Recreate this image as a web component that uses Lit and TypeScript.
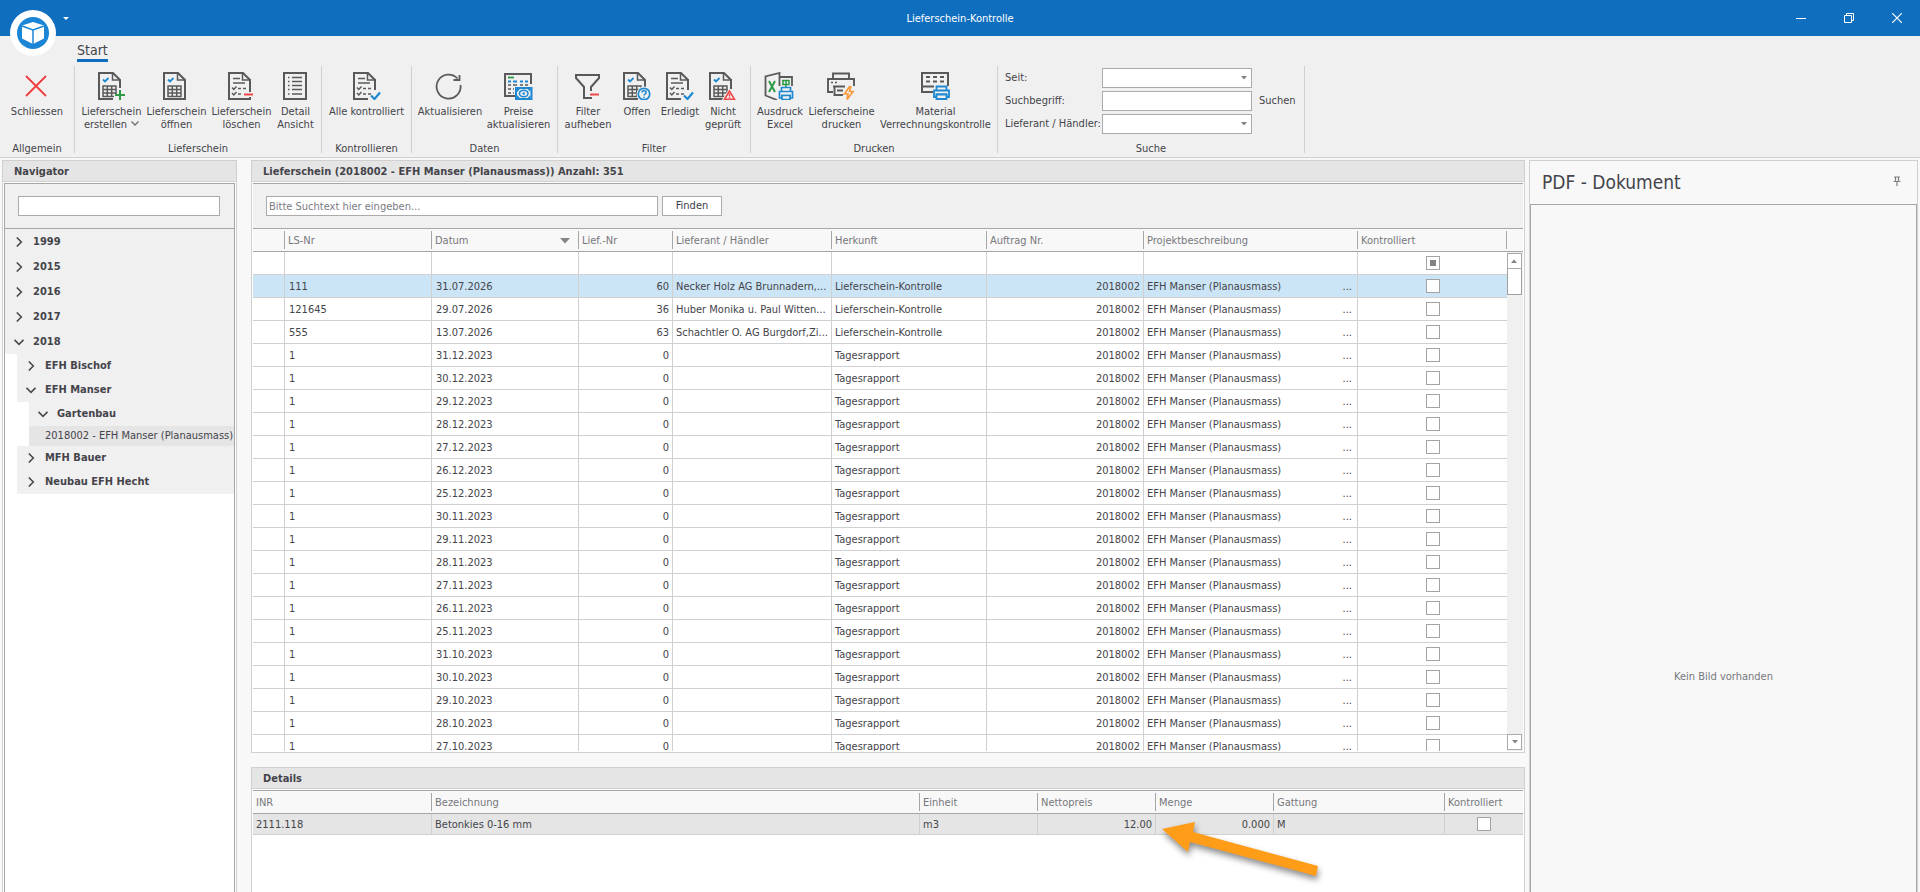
import { LitElement, html, css, svg, nothing } from "lit";
import { customElement, property } from "lit/decorators.js";
import { classMap } from "lit/directives/class-map.js";

const INK = "#595959";
const BLUE = "#1e88d0";
const RED = "#f04848";
const GREEN = "#2d9a45";

const sheet = svg`<g fill="none" stroke=${INK} stroke-width="2">
  <path d="M4 1H18L25 8V16M4 0V28M3 27H18" />
  <path d="M17.500 1V8H25" stroke-width="1.500" />
</g>`;
const sheetFull = svg`<g fill="none" stroke=${INK} stroke-width="2">
  <path d="M4 1H18L25 8V27H4Z" />
  <path d="M17.500 1V8H25" stroke-width="1.500" />
</g>`;
const calc = svg`<path d="M8 7.500L10 9.500L13.500 6" fill="none" stroke=${BLUE} stroke-width="1.800" />
  <path d="M7.500 14H21.500M7.500 17.500H21.500M7.500 21H21.500M7.500 24.500H21.500M8 13.500V25M12.300 13.500V25M16.700 13.500V25M21 13.500V25" fill="none" stroke=${INK} stroke-width="1.500" />`;
const list = svg`<path d="M8 6.500H15M8 11H20M13 16.500H16M18 16.500H21M13 22H16M18 22H21" fill="none" stroke=${INK} stroke-width="1.700" />
  <path d="M7 15.500L8.800 17.500L11.500 14.500M7 21L8.800 23L11.500 20" fill="none" stroke=${INK} stroke-width="1.500" />`;
const blueTick = svg`<path d="M21 23.500L24.500 27L30 20.500" fill="none" stroke=${BLUE} stroke-width="2.200" />`;
const printerBadge = svg`<g fill="#f0f0f0" stroke=${BLUE} stroke-width="1.700">
  <path d="M18.500 20V15.500H27.500V20" /><path d="M16.500 19.500H29.500V26H27V23.500H19V26H16.500Z" /><path d="M19 23.500H27V27.500H19Z" />
</g>`;

const ICONS: Record<string, unknown> = {
  close: svg`<path d="M6 4L26 24M26 4L6 24" stroke="#f03c3c" stroke-width="1.800" fill="none" />`,
  create: svg`${sheet}${calc}<path d="M19 22H25V18H30V28H19Z" fill="#f0f0f0" /><path d="M25 18V28M20 23H30" stroke=${GREEN} stroke-width="2" />`,
  open: svg`${sheetFull}${calc}`,
  remove: svg`${sheet}${list}<path d="M25 7V20M17 27H25V25" stroke=${INK} stroke-width="2" fill="none" /><path d="M18 22H28" stroke="#f0f0f0" stroke-width="4" /><path d="M19 22.500H28" stroke=${RED} stroke-width="2" />`,
  detail: svg`<rect x="5" y="1" width="22" height="26" fill="none" stroke=${INK} stroke-width="2" />
    <path d="M9 5.500H10.500M9 9.500H10.500M9 13.500H10.500M9 17.500H10.500M9 22H10.500M13 5.500H23M13 9.500H23M13 13.500H23M13 17.500H23M13 22H23" stroke=${INK} stroke-width="1.600" />`,
  check: svg`${sheet}${list}<path d="M25 7V18" stroke=${INK} stroke-width="2" />${blueTick}`,
  refresh: svg`<path d="M27.500 13A12 12 0 1 1 24.500 6.500" fill="none" stroke=${INK} stroke-width="1.800" />
    <path d="M26.500 3V8H20.500" fill="none" stroke=${INK} stroke-width="1.800" />`,
  price: svg`<path d="M13 24H3V2H29V12" fill="none" stroke=${INK} stroke-width="2" />
    <path d="M6 5.500H12" stroke=${GREEN} stroke-width="1.800" />
    <path d="M6 9.500H9M11 9.500H15M18 9.500H21M23 9.500H26" stroke=${BLUE} stroke-width="1.800" />
    <path d="M6 13H9M11 13H15M18 13H21M23 13H26M6 17H9M11 17H12M6 21H9M11 21H12" stroke=${INK} stroke-width="1.500" />
    <path d="M13 15H30V28H13Z" fill="#f0f0f0" /><path d="M14 16H29.500V27H14Z" fill="none" stroke=${BLUE} stroke-width="2" />
    <ellipse cx="21.700" cy="21.500" rx="4.300" ry="3.300" fill="none" stroke=${BLUE} stroke-width="1.600" /><circle cx="21.700" cy="21.500" r="1.300" fill=${BLUE} />
    <path d="M15 20V17H18ZM28.500 20V17H25.500ZM15 23V26H18ZM28.500 23V26H25.500Z" fill=${BLUE} />`,
  funnel: svg`<path d="M21 26H13V15L5 6V3H28V6L20 15V19" fill="none" stroke=${INK} stroke-width="2" /><path d="M19 22.500H28" stroke=${RED} stroke-width="2" />`,
  question: svg`${sheet}${calc}<circle cx="24" cy="22" r="7.500" fill="#f0f0f0" /><circle cx="24" cy="22" r="5.700" fill="none" stroke=${BLUE} stroke-width="1.700" />
    <path d="M22 20.500C22 18.200 26.200 18.200 26.200 20.500C26.200 22 24.100 21.800 24.100 23.600M24.100 24.800V26" fill="none" stroke=${BLUE} stroke-width="1.500" />`,
  warning: svg`${sheet}${calc}<path d="M25 7V17" stroke=${INK} stroke-width="2" /><path d="M23 17L15.500 28.500H30Z" fill="#f0f0f0" /><path d="M23.500 19L18.500 27.300H28.500Z" fill="none" stroke=${RED} stroke-width="1.600" /><path d="M23.500 21.500V24.500M23.500 25V26.200" stroke=${RED} stroke-width="1.500" />`,
  excel: svg`<path d="M14 28L2.500 23.500V4.500L16.500 1V14" fill="none" stroke=${INK} stroke-width="1.800" /><path d="M17 5H29V14" fill="none" stroke=${INK} stroke-width="1.800" />
    <path d="M6 9L12 20M12 9L6 20" stroke=${GREEN} stroke-width="2" /><path d="M19 8.500H26.500M19 12.500H26.500M20 8V13M23 8V15M26 8V13" stroke=${GREEN} stroke-width="1.500" />${printerBadge}`,
  printer: svg`<path d="M8 7V1.500H24V7M8 20H3V7H29V14M8 14.500H20M9.500 14.500V23H18M12 18.500H18" fill="none" stroke=${INK} stroke-width="1.900" />
    <path d="M6 10.500H8M10 10.500H12" stroke=${INK} stroke-width="1.600" /><path d="M25 14L19.500 22H23L22 27.500L28 19.500H24.500L26 14" fill="none" stroke="#f79a3c" stroke-width="1.700" />`,
  material: svg`<path d="M14 20H3V1H29V14M3 14.500H15" fill="none" stroke=${INK} stroke-width="2" />
    <path d="M7 5H11M14 5H18M21 5H25M7 9.500H11M14 9.500H18M21 9.500H25" stroke=${INK} stroke-width="1.800" />
    <g fill="#f0f0f0" stroke=${BLUE} stroke-width="1.800"><path d="M17.500 19V14.500H27.500V19" /><path d="M15 18.500H30V25H27.500V22.500H17.500V25H15Z" /><path d="M17.500 22.500H27.500V27H17.500Z" /></g>`,
};

const chevronDown = html`<svg class="caret" width="8" height="5" viewBox="0 0 8 5" aria-hidden="true"><path d="M0.500 0.500L4 4L7.500 0.500" fill="none" stroke="#6e6e6e" stroke-width="1.300" /></svg>`;
const triDown = html`<svg width="6" height="4" viewBox="0 0 6 4" aria-hidden="true"><path d="M0 0H6L3 3.500Z" fill="#848484" /></svg>`;

interface Item { icon: string; lines: string[]; size: string; menu?: boolean }
interface Group { caption: string; items: Item[] }

const GROUPS: Group[] = [
  { caption: "Allgemein", items: [{ icon: "close", lines: ["Schliessen"], size: "w66" }] },
  {
    caption: "Lieferschein",
    items: [
      { icon: "create", lines: ["Lieferschein", "erstellen"], size: "w65", menu: true },
      { icon: "open", lines: ["Lieferschein", "öffnen"], size: "w65" },
      { icon: "remove", lines: ["Lieferschein", "löschen"], size: "w65" },
      { icon: "detail", lines: ["Detail", "Ansicht"], size: "w43" },
    ],
  },
  { caption: "Kontrollieren", items: [{ icon: "check", lines: ["Alle kontrolliert"], size: "w81" }] },
  {
    caption: "Daten",
    items: [
      { icon: "refresh", lines: ["Aktualisieren"], size: "w68" },
      { icon: "price", lines: ["Preise", "aktualisieren"], size: "w69" },
    ],
  },
  {
    caption: "Filter",
    items: [
      { icon: "funnel", lines: ["Filter", "aufheben"], size: "w52" },
      { icon: "question", lines: ["Offen"], size: "w46" },
      { icon: "check", lines: ["Erledigt"], size: "w40" },
      { icon: "warning", lines: ["Nicht", "geprüft"], size: "w46" },
    ],
  },
  {
    caption: "Drucken",
    items: [
      { icon: "excel", lines: ["Ausdruck", "Excel"], size: "w50" },
      { icon: "printer", lines: ["Lieferscheine", "drucken"], size: "w73" },
      { icon: "material", lines: ["Material", "Verrechnungskontrolle"], size: "w115" },
    ],
  },
];

const base = css`
  :host, * { box-sizing: border-box; }
  button, input, select { font: inherit; color: inherit; margin: 0; padding: 0; border: 0; border-radius: 0; background: none; outline: none; }
  .field { height: 20px; border: 1px solid #ababab; background: #fff; padding: 0 2px; min-width: 0; }
  .field::placeholder { color: #7b7b85; opacity: 1; }
  .box { appearance: none; display: block; width: 14px; height: 14px; margin: 0 auto; border: 1px solid #a3a3a3; background: #fff; }
  .box:indeterminate { background: linear-gradient(#848484, #848484) center / 6px 6px no-repeat #fff; }
`;

@customElement("title-bar")
export class TitleBar extends LitElement {
  static styles = [base, css`
    :host { display: block; position: relative; z-index: 2; }
    .bar { display: grid; grid-template-columns: 1fr auto 1fr; align-items: center; height: 36px; background: #106ebe; color: #fff; }
    .start { display: flex; align-items: flex-start; gap: 6px; height: 36px; padding: 10px 0 0 10px; }
    .logo { flex: none; width: 46px; height: 46px; }
    .logo svg { display: block; }
    .quick { width: 7px; height: 16px; }
    .title { font-size: 11px; line-height: 14px; font-weight: 400; margin: 0; padding-top: 1px; }
    .controls { display: flex; justify-content: flex-end; }
    .control { width: 48px; height: 36px; padding-left: 2px; display: grid; place-items: center; }
  `];

  render() {
    return html`<header class="bar">
      <div class="start">
        <button class="logo" aria-label="Anwendungsmenü">
          <svg width="46" height="46" viewBox="0 0 46 46">
            <circle cx="23" cy="23" r="23" fill="#fff" /><circle cx="23" cy="23" r="16" fill="#1c86d6" />
            <path d="M23 12L34 15.500V28.500L23 34L12 28.500V15.500Z" fill="#fff" />
            <path d="M12 16L23 20L34 16M23 20V34" fill="none" stroke="#1c86d6" stroke-width="1.500" />
          </svg>
        </button>
        <button class="quick" aria-label="Schnellzugriff"><svg width="6" height="4" viewBox="0 0 6 4"><path d="M0 0H6L3 3Z" fill="#fff" /></svg></button>
      </div>
      <h1 class="title">Lieferschein-Kontrolle</h1>
      <div class="controls">
        <button class="control" aria-label="Minimieren"><svg width="10" height="10" viewBox="0 0 10 10"><path d="M0 5.500H10" stroke="#fff" /></svg></button>
        <button class="control" aria-label="Wiederherstellen"><svg width="10" height="10" viewBox="0 0 10 10"><path d="M0.500 2.500H7.500V9.500H0.500ZM2.500 2.500V0.500H9.500V7.500H7.500" fill="none" stroke="#fff" /></svg></button>
        <button class="control" aria-label="Fenster schliessen"><svg width="10" height="10" viewBox="0 0 10 10"><path d="M0 0L10 10M10 0L0 10" stroke="#fff" stroke-width="1.200" /></svg></button>
      </div>
    </header>`;
  }
}

@customElement("ribbon-bar")
export class RibbonBar extends LitElement {
  static styles = [base, css`
    :host { display: block; background: #f0f0f0; border-bottom: 1px solid #d0d0d0; }
    .tabs { height: 30px; padding: 6px 0 0 77px; display: flex; }
    .tab { height: 20px; padding-bottom: 3px; border-bottom: 3px solid #106ebe; font-size: 14px; line-height: 16px; }
    .groups { display: flex; height: 91px; }
    .group { display: flex; flex-direction: column; padding: 0 4px; }
    .rule { width: 1px; height: 87px; background: #d0d0d0; flex: none; }
    .items { display: flex; height: 76px; }
    .item { flex: none; display: flex; flex-direction: column; align-items: center; padding-top: 6px; line-height: 13px; white-space: nowrap; }
    .icon { display: block; flex: none; margin: 0 2px 5px 0; }
    .caption { text-align: center; line-height: 16px; }
    .caret { margin-left: 4px; vertical-align: 2px; }
    .w40 { width: 40px; } .w43 { width: 43px; } .w46 { width: 46px; } .w50 { width: 50px; } .w52 { width: 52px; }
    .w65 { width: 65px; } .w66 { width: 66px; } .w68 { width: 68px; } .w69 { width: 69px; } .w73 { width: 73px; }
    .w81 { width: 81px; } .w115 { width: 115px; }
    .search { display: grid; grid-template-columns: 97px 150px auto; grid-auto-rows: 20px; row-gap: 3px; align-items: center; height: 76px; padding: 2px 5px 0 3px; }
    .search label { grid-column: 1; white-space: nowrap; }
    .find { padding: 0 0 0 7px; width: 43px; }
    .combo { grid-column: 2; display: grid; align-items: center; }
    .combo > * { grid-area: 1 / 1; }
    .combo select { appearance: none; width: 100%; }
    .combo svg { justify-self: end; margin-right: 5px; pointer-events: none; }
    .text { width: 100%; }
  `];

  render() {
    return html`
      <nav class="tabs"><button class="tab">Start</button></nav>
      <div class="groups">
        ${GROUPS.map((g) => html`
          <section class="group">
            <div class="items">
              ${g.items.map((i) => html`<button class="item ${i.size}">
                <svg class="icon" width="32" height="28" viewBox="0 0 32 28" aria-hidden="true">${ICONS[i.icon]}</svg>
                ${i.lines.map((l, n) => html`<span>${l}${i.menu && n === 1 ? chevronDown : nothing}</span>`)}
              </button>`)}
            </div>
            <div class="caption">${g.caption}</div>
          </section>
          <div class="rule"></div>`)}
        <section class="group">
          <div class="search">
            <label for="since">Seit:</label>
            <div class="combo"><select id="since" class="field"></select>${triDown}</div>
            <label for="term">Suchbegriff:</label>
            <input id="term" class="field text" />
            <button class="find">Suchen</button>
            <label for="vendor">Lieferant / Händler:</label>
            <div class="combo"><select id="vendor" class="field"></select>${triDown}</div>
          </div>
          <div class="caption">Suche</div>
        </section>
        <div class="rule"></div>
      </div>`;
  }
}

interface Node { label: string; level: number; open?: boolean; leaf?: boolean }
const TREE: Node[] = [
  { label: "1999", level: 0 }, { label: "2015", level: 0 }, { label: "2016", level: 0 }, { label: "2017", level: 0 },
  { label: "2018", level: 0, open: true },
  { label: "EFH Bischof", level: 1 }, { label: "EFH Manser", level: 1, open: true },
  { label: "Gartenbau", level: 2, open: true },
  { label: "2018002 - EFH Manser (Planausmass)", level: 2, leaf: true },
  { label: "MFH Bauer", level: 1 }, { label: "Neubau EFH Hecht", level: 1 },
];

const panel = css`
  .panel { display: flex; flex-direction: column; border: 1px solid #d0d0d0; padding: 0 1px; background: #fff; min-height: 0; }
  .cut { border-bottom: 0; }
  .head { flex: none; height: 21px; margin: 0 -1px 1px; padding: 0 11px; background: #e5e5e5; border-bottom: 1px solid #d0d0d0; font-size: 11px; line-height: 22px; font-weight: 700; white-space: nowrap; }
`;

@customElement("navigator-panel")
export class NavigatorPanel extends LitElement {
  static styles = [base, panel, css`
    :host { display: flex; flex-direction: column; }
    .panel { flex: 1; }
    .inner { flex: 1; border: 1px solid #a6a6a6; border-bottom: 0; overflow: hidden; }
    .filter { height: 45px; padding: 12px 14px 0 13px; background: #f0f0f0; border-bottom: 1px solid #a6a6a6; }
    .filter input { width: 100%; display: block; }
    .tree { list-style: none; margin: 0; padding: 0; }
    .node { display: flex; align-items: center; height: 24px; background: #f0f0f0; font-weight: 700; line-height: 16px; white-space: nowrap; }
    .toggle { width: 28px; height: 24px; display: grid; place-items: center; }
    .l0 { height: 25px; }
    .l1 { margin-left: 12px; }
    .l2 { margin-left: 24px; }
    .leaf { height: 20px; padding-left: 16px; background: #e5e5e5; font-weight: 400; }
  `];

  render() {
    return html`<section class="panel cut">
      <h2 class="head">Navigator</h2>
      <div class="inner">
        <div class="filter"><input class="field" aria-label="Navigator durchsuchen" /></div>
        <ul class="tree">
          ${TREE.map((n) => html`<li class=${classMap({ node: true, ["l" + n.level]: true, leaf: !!n.leaf })}>
            ${n.leaf ? nothing : html`<button class="toggle" aria-label=${n.open ? "Zuklappen" : "Aufklappen"}>
              <svg width="10" height="10" viewBox="0 0 10 10"><path d=${n.open ? "M0.500 2.800L5 7.300L9.500 2.800" : "M2.800 0.500L7.300 5L2.800 9.500"} fill="none" stroke="#4a4a4a" stroke-width="1.600" /></svg>
            </button>`}<span>${n.label}</span></li>`)}
        </ul>
      </div>
    </section>`;
  }
}

type Row = [string, string, string, string, string];
const TR = "Tagesrapport";
const LK = "Lieferschein-Kontrolle";
const ROWS: Row[] = [
  ["111", "31.07.2026", "60", "Necker Holz AG Brunnadern,...", LK],
  ["121645", "29.07.2026", "36", "Huber Monika u. Paul Witten...", LK],
  ["555", "13.07.2026", "63", "Schachtler O. AG Burgdorf,Zi...", LK],
  ...["31.12", "30.12", "29.12", "28.12", "27.12", "26.12", "25.12", "30.11", "29.11", "28.11", "27.11", "26.11", "25.11", "31.10", "30.10", "29.10", "28.10", "27.10"]
    .map((d): Row => ["1", d + ".2023", "0", "", TR]),
];

const tableStyles = css`
  table { width: 100%; table-layout: fixed; border-collapse: separate; border-spacing: 0; }
  th, td { padding: 0; text-align: left; font-weight: 400; white-space: nowrap; overflow: hidden; text-overflow: ellipsis; }
  th { height: 23px; background: #f8f8f8; color: #77777c; border-bottom: 1px solid #a6a6a6; }
  .th { display: flex; align-items: center; justify-content: space-between; height: 18px; padding: 1px 8px 0 3px; border-right: 1px solid #a6a6a6; }
  td { padding: 1px 3px 0; border-right: 1px solid #d0d0d0; border-bottom: 1px solid #d0d0d0; }
  td:last-child { border-right: 0; padding-top: 0; }
  .num { text-align: right; }
`;

@customElement("delivery-grid")
export class DeliveryGrid extends LitElement {
  static styles = [base, panel, tableStyles, css`
    :host { display: flex; flex-direction: column; min-height: 0; }
    .panel { flex: 1; }
    .finder { flex: none; display: flex; gap: 4px; height: 46px; padding: 12px 13px 0; background: #f0f0f0; border-top: 1px solid #a6a6a6; border-bottom: 1px solid #a6a6a6; }
    .finder .field { width: 392px; }
    .finder .go { width: 60px; color: #3c3c4a; }
    .body { flex: 1; display: flex; min-height: 0; margin-bottom: 1px; }
    .view { flex: 1; min-width: 0; overflow: hidden; }
    td { height: 23px; }
    .c0 { width: 32px; } .c1 { width: 147px; } .c3 { width: 94px; } .c4 { width: 159px; } .c5 { width: 155px; } .c6 { width: 157px; } .c8 { width: 149px; }
    .wide { padding-left: 4px; }
    .vendor { padding-right: 0; }
    .on td { background: #cce5f6; }
    .pair { display: flex; justify-content: space-between; padding-right: 2px; }
    .side { flex: none; width: 16px; display: flex; flex-direction: column; background: #f0f0f0; }
    .stub { flex: none; height: 23px; background: #f8f8f8; border-bottom: 1px solid #a6a6a6; }
    .track { flex: 1; display: flex; flex-direction: column; padding: 1px 1px 1px 0; }
    .step { height: 16px; border: 1px solid #ababab; background: #fff; display: grid; place-items: center; flex: none; }
    .thumb { flex: none; height: 27px; margin-top: -1px; border: 1px solid #a0a0a0; background: #fff; }
    .gap { flex: 1; }
    .up { transform: rotate(180deg); }
  `];

  @property({ attribute: false }) rows: Row[] = ROWS;

  firstUpdated() {
    const box = this.renderRoot.querySelector<HTMLInputElement>(".tri");
    if (box) box.indeterminate = true;
  }

  render() {
    return html`<section class="panel">
      <h2 class="head">Lieferschein (2018002 - EFH Manser (Planausmass)) Anzahl: 351</h2>
      <div class="finder">
        <input class="field" placeholder="Bitte Suchtext hier eingeben..." aria-label="Suchtext" />
        <button class="field go">Finden</button>
      </div>
      <div class="body">
        <div class="view">
          <table>
            <colgroup><col class="c0" /><col class="c1" /><col class="c1" /><col class="c3" /><col class="c4" /><col class="c5" /><col class="c6" /><col /><col class="c8" /></colgroup>
            <thead><tr>
              <th><div class="th"></div></th><th><div class="th">LS-Nr</div></th>
              <th><div class="th">Datum<svg width="10" height="6" viewBox="0 0 10 6" aria-hidden="true"><path d="M0 0H10L5 5.500Z" fill="#848484" /></svg></div></th>
              ${["Lief.-Nr", "Lieferant / Händler", "Herkunft", "Auftrag Nr.", "Projektbeschreibung", "Kontrolliert"].map((t) => html`<th><div class="th">${t}</div></th>`)}
            </tr></thead>
            <tbody>
              <tr><td></td><td></td><td></td><td></td><td></td><td></td><td></td><td></td><td><input type="checkbox" class="box tri" aria-label="Filter Kontrolliert" /></td></tr>
              ${this.rows.map((r, n) => html`<tr class=${classMap({ on: n === 0 })}>
                <td></td><td class="wide">${r[0]}</td><td class="wide">${r[1]}</td><td class="num">${r[2]}</td><td class="vendor">${r[3]}</td><td>${r[4]}</td><td class="num">2018002</td>
                <td><div class="pair"><span>EFH Manser (Planausmass)</span><button aria-label="Projekt wählen">...</button></div></td>
                <td><input type="checkbox" class="box" aria-label="Kontrolliert" /></td>
              </tr>`)}
            </tbody>
          </table>
        </div>
        <div class="side">
          <div class="stub"></div>
          <div class="track">
            <button class="step up" aria-label="Nach oben">${triDown}</button>
            <div class="thumb"></div>
            <div class="gap"></div>
            <button class="step" aria-label="Nach unten">${triDown}</button>
          </div>
        </div>
      </div>
    </section>`;
  }
}

@customElement("details-grid")
export class DetailsGrid extends LitElement {
  static styles = [base, panel, tableStyles, css`
    :host { display: flex; flex-direction: column; }
    .panel { flex: 1; }
    table { border-top: 1px solid #a6a6a6; }
    td { height: 21px; background: #e5e5e5; }
    .c0 { width: 179px; } .c2 { width: 118px; } .c5 { width: 171px; } .c6 { width: 78px; }
    th:last-child .th { border-right: 0; padding-right: 0; }
  `];

  render() {
    return html`<section class="panel cut">
      <h2 class="head">Details</h2>
      <table>
        <colgroup><col class="c0" /><col /><col class="c2" /><col class="c2" /><col class="c2" /><col class="c5" /><col class="c6" /></colgroup>
        <thead><tr>${["INR", "Bezeichnung", "Einheit", "Nettopreis", "Menge", "Gattung", "Kontrolliert"].map((t) => html`<th><div class="th">${t}</div></th>`)}</tr></thead>
        <tbody><tr>
          <td>2111.118</td><td>Betonkies 0-16 mm</td><td>m3</td><td class="num">12.00</td><td class="num">0.000</td><td>M</td>
          <td><input type="checkbox" class="box" aria-label="Kontrolliert" /></td>
        </tr></tbody>
      </table>
    </section>`;
  }
}

@customElement("pdf-panel")
export class PdfPanel extends LitElement {
  static styles = [base, css`
    :host { display: flex; flex-direction: column; border: 1px solid #d0d0d0; border-bottom: 0; background: #f8f8f8; }
    .top { flex: none; display: flex; align-items: center; justify-content: space-between; height: 43px; padding: 0 16px 2px 12px; }
    .name { margin: 0; font-size: 19px; line-height: 22px; font-weight: 400; }
    .view { flex: 1; border: 1px solid #a6a6a6; border-bottom: 0; padding-top: 465px; text-align: center; line-height: 14px; color: #77777c; }
    .pin { height: 12px; }
  `];

  render() {
    return html`
      <div class="top"><h2 class="name">PDF - Dokument</h2>
        <button class="pin" aria-label="Anheften"><svg width="8" height="10" viewBox="0 0 8 10"><path d="M1 1H7M2.500 1V5M5.500 1V5M0.500 5.500H7.500M4 6V10" fill="none" stroke="#808080" stroke-width="1.200" /></svg></button>
      </div>
      <div class="view">Kein Bild vorhanden</div>`;
  }
}

@customElement("app-root")
export class AppRoot extends LitElement {
  static styles = css`
    :host { display: flex; flex-direction: column; position: relative; height: 100vh; overflow: hidden; background: #f8f8f8; color: #44444a; font-family: "DejaVu Sans Condensed", "DejaVu Sans", sans-serif; font-size: 11px; line-height: 14px; }
    .work { flex: 1; display: flex; min-height: 0; padding: 2px 2px 0; }
    navigator-panel { flex: none; width: 235px; margin-right: 14px; }
    .center { flex: 1; min-width: 0; display: flex; flex-direction: column; gap: 14px; }
    delivery-grid { flex: 1; }
    details-grid { flex: none; height: 125px; }
    pdf-panel { flex: none; width: 389px; margin-left: 4px; }
    .pointer { position: absolute; right: 592px; bottom: 6px; filter: drop-shadow(1px 4px 3px rgba(0, 0, 0, 0.45)); pointer-events: none; }
  `;

  render() {
    return html`
      <title-bar></title-bar>
      <ribbon-bar></ribbon-bar>
      <main class="work">
        <navigator-panel></navigator-panel>
        <div class="center"><delivery-grid></delivery-grid><details-grid></details-grid></div>
        <pdf-panel></pdf-panel>
      </main>
      <svg class="pointer" width="168" height="66" viewBox="0 0 168 66" aria-hidden="true">
        <path d="M2 9L35 2L33 12L158 46L156 56L30 22L28 32Z" fill="#ff9d19" />
      </svg>`;
  }
}
